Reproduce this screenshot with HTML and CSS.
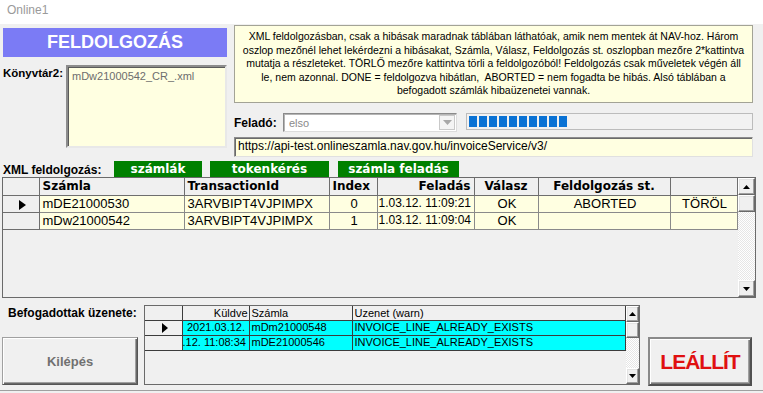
FILE: index.html
```html
<!DOCTYPE html>
<html lang="hu">
<head>
<meta charset="utf-8">
<title>Online1</title>
<link rel="stylesheet" href="styles.css">
</head>
<body>
<div class="win">
  <div class="titlebar">Online1</div>
  <div class="top">
    <div class="left">
      <div class="feld-btn">FELDOLGOZÁS</div>
      <div class="kv-row">
        <span class="lbl">Könyvtár2:</span>
        <div class="kv-box">mDw21000542_CR_.xml</div>
      </div>
    </div>
    <div class="right">
      <div class="info">XML feldolgozásban, csak a hibásak maradnak táblában láthatóak, amik nem mentek át NAV-hoz. Három<br>oszlop mezőnél lehet lekérdezni a hibásakat, Számla, Válasz, Feldolgozás st. oszlopban mezőre 2*kattintva<br>mutatja a részleteket. TÖRLŐ mezőre kattintva törli a feldolgozóból! Feldolgozás csak műveletek végén áll<br>le, nem azonnal. DONE = feldolgozva hibátlan,&nbsp; ABORTED = nem fogadta be hibás. Alsó táblában a<br>befogadott számlák hibaüzenetei vannak.</div>
      <div class="sender-row">
        <span class="lbl lbl-sender">Feladó:</span>
        <div class="combo">
          <span class="combo-text">elso</span>
          <span class="combo-btn"><svg width="9" height="5" viewBox="0 0 9 5"><path d="M0 0h9L4.5 5z" fill="#a8a8a8"/></svg></span>
        </div>
        <div class="progress">
          <span class="seg"></span><span class="seg"></span><span class="seg"></span><span class="seg"></span><span class="seg"></span><span class="seg"></span><span class="seg"></span><span class="seg"></span><span class="seg"></span><span class="seg"></span>
        </div>
      </div>
      <div class="url">https://api-test.onlineszamla.nav.gov.hu/invoiceService/v3/</div>
    </div>
  </div>

  <div class="xml-row">
    <span class="lbl">XML feldolgozás:</span>
    <span class="gbtn g1">számlák</span>
    <span class="gbtn g2">tokenkérés</span>
    <span class="gbtn g3">számla feladás</span>
  </div>

  <div class="grid main-grid">
    <table class="tbl main-tbl">
      <colgroup>
        <col style="width:36px"><col style="width:145px"><col style="width:145px"><col style="width:48px"><col style="width:97px"><col style="width:64px"><col style="width:132px"><col style="width:67px">
      </colgroup>
      <thead>
        <tr><th></th><th class="l">Számla</th><th class="l">TransactionId</th><th class="l">Index</th><th class="r">Feladás</th><th>Válasz</th><th>Feldolgozás st.</th><th></th></tr>
      </thead>
      <tbody>
        <tr><td class="ind"><span class="tri"></span></td><td>mDE21000530</td><td>3ARVBIPT4VJPIMPX</td><td class="c">0</td><td class="dt">1.03.12. 11:09:21</td><td class="c">OK</td><td class="c">ABORTED</td><td class="c">TÖRÖL</td></tr>
        <tr><td class="ind"></td><td>mDw21000542</td><td>3ARVBIPT4VJPIMPX</td><td class="c">1</td><td class="dt">1.03.12. 11:09:04</td><td class="c">OK</td><td></td><td></td></tr>
      </tbody>
    </table>
    <div class="vscroll">
      <div class="sbtn"><svg width="7" height="4" viewBox="0 0 7 4"><path d="M3.5 0L7 4H0z" fill="#000"/></svg></div>
      <div class="sthumb"></div>
      <div class="strack"></div>
      <div class="sbtn"><svg width="7" height="4" viewBox="0 0 7 4"><path d="M0 0h7L3.5 4z" fill="#000"/></svg></div>
    </div>
  </div>

  <div class="bottom">
    <div class="bleft">
      <div class="lbl lbl-bef">Befogadottak üzenete:</div>
      <div class="btn kilep">Kilépés</div>
    </div>
    <div class="grid low-grid">
      <table class="tbl low-tbl">
        <colgroup>
          <col style="width:37px"><col style="width:67px"><col style="width:103px"><col style="width:273px">
        </colgroup>
        <thead>
          <tr><th></th><th class="r">Küldve</th><th class="l">Számla</th><th class="l">Uzenet (warn)</th></tr>
        </thead>
        <tbody>
          <tr><td class="ind"><span class="tri"></span></td><td class="c">2021.03.12.</td><td>mDm21000548</td><td>INVOICE_LINE_ALREADY_EXISTS</td></tr>
          <tr><td class="ind"></td><td class="clip">.12. 11:08:34</td><td>mDE21000546</td><td>INVOICE_LINE_ALREADY_EXISTS</td></tr>
        </tbody>
      </table>
      <div class="vscroll small">
        <div class="sbtn"><svg width="7" height="4" viewBox="0 0 7 4"><path d="M3.5 0L7 4H0z" fill="#000"/></svg></div>
        <div class="sthumb"></div>
        <div class="strack"></div>
        <div class="sbtn"><svg width="7" height="4" viewBox="0 0 7 4"><path d="M0 0h7L3.5 4z" fill="#000"/></svg></div>
      </div>
    </div>
    <div class="bright">
      <div class="btn leallit">LEÁLLÍT</div>
    </div>
  </div>
  <div class="status"></div>
</div>
</body>
</html>
```

FILE: styles.css
```css
* { box-sizing: border-box; }
html, body { margin: 0; padding: 0; }
body {
  width: 763px;
  height: 393px;
  overflow: hidden;
  background: #f0f0f0;
  font-family: "Liberation Sans", Arial, sans-serif;
  color: #000;
}
.win { width: 763px; height: 393px; position: relative; }

.titlebar {
  height: 24px;
  background: #ffffff;
  color: #9a9a9a;
  font-size: 12px;
  line-height: 20px;
  padding-left: 7px;
}

.lbl {
  font-weight: bold;
  font-size: 12px;
  white-space: nowrap;
}

.top {
  display: flex;
  align-items: flex-start;
  gap: 7px;
  padding-left: 3px;
  height: 136px;
}
.left { width: 224px; }
.feld-btn {
  margin-top: 4px;
  height: 29px;
  background: #7b7bf5;
  color: #fff;
  font-weight: bold;
  font-size: 18px;
  display: flex;
  align-items: center;
  justify-content: center;
  padding-bottom: 1px;
}
.kv-row {
  display: flex;
  align-items: flex-start;
  margin-top: 8px;
}
.kv-row .lbl { padding-top: 2px; font-size: 11.5px; }
.kv-box {
  margin-left: auto;
  width: 161px;
  height: 83px;
  background: #ffffe1;
  border: 2px solid;
  border-color: #8c8c8c #e8e8e8 #e8e8e8 #8c8c8c;
  box-shadow: inset 1px 1px 0 #5a5a5a;
  color: #6d6d6d;
  font-size: 11px;
  padding: 3px 0 0 4px;
}

.right { width: 519px; }
.info {
  margin-top: 1px;
  height: 78px;
  background: #ffffe1;
  border: 1px solid #a3a396;
  font-size: 10.5px;
  line-height: 13.5px;
  text-align: center;
  padding-top: 4px;
  white-space: nowrap;
  overflow: hidden;
}
.sender-row {
  display: flex;
  align-items: flex-start;
  margin-top: 10px;
  height: 19px;
}
.lbl-sender { width: 49px; padding-top: 3px; }
.combo {
  width: 174px;
  height: 19px;
  background: #fff;
  border: 1px solid;
  border-color: #8a8a8a #dcdcdc #dcdcdc #8a8a8a;
  box-shadow: inset 1px 1px 0 #b5b5b5;
  display: flex;
  align-items: center;
}
.combo-text {
  flex: 1;
  color: #8a8a8a;
  font-size: 11px;
  padding-left: 5px;
}
.combo-btn {
  width: 16px;
  height: 15px;
  margin-right: 1px;
  border: 1px solid #c9c9c9;
  background: #f4f4f4;
  display: flex;
  align-items: center;
  justify-content: center;
}
.progress {
  margin-left: 9px;
  width: 287px;
  height: 17px;
  border: 1px solid #bcbcbc;
  background: #f2f2f2;
  display: flex;
  gap: 2px;
  padding: 2px 0 2px 2px;
}
.seg { width: 8px; height: 100%; background: #0a72d4; }
.url {
  margin-top: 5px;
  height: 20px;
  background: #ffffe1;
  border: 1px solid;
  border-color: #8c8c8c #e0e0e0 #e0e0e0 #8c8c8c;
  box-shadow: inset 1px 1px 0 #6a6a6a;
  font-size: 12px;
  line-height: 17px;
  padding-left: 3px;
  white-space: nowrap;
}

.xml-row {
  display: flex;
  align-items: flex-end;
  margin-top: 1px;
  height: 16px;
  padding-left: 3px;
}
.xml-row .lbl { width: 111px; line-height: 14px; }
.gbtn {
  height: 16px;
  background: #008000;
  color: #fff;
  font-family: "DejaVu Sans", Verdana, sans-serif;
  font-weight: bold;
  font-size: 12px;
  line-height: 16px;
  text-align: center;
}
.g1 { width: 88px; }
.g2 { width: 119px; margin-left: 8px; }
.g3 { width: 121px; margin-left: 9px; }

.grid {
  display: flex;
  border: 1px solid #6a6a6a;
  background: #f0f0f0;
}
.main-grid {
  margin-left: 2px;
  width: 754px;
  height: 121px;
}
.tbl {
  border-collapse: collapse;
  table-layout: fixed;
  align-self: flex-start;
}
.main-tbl { width: 734px; }
.main-tbl th {
  height: 17px;
  font-family: "DejaVu Sans", Verdana, sans-serif;
  font-weight: bold;
  font-size: 12px;
  border: 1px solid #6e6e6e;
  border-top: 0;
  padding: 0 3px;
  background: #f0f0f0;
  white-space: nowrap;
  overflow: hidden;
}
.main-tbl th:first-child { border-left: 0; }
.main-tbl td {
  height: 17px;
  font-size: 13px;
  border: 1px solid #8a8a8a;
  padding: 0 1px 0 3px;
  background: #ffffe1;
  white-space: nowrap;
  overflow: hidden;
  line-height: 15px;
}
.main-tbl td.dt { font-size: 12px; padding-left: 1px; }
.main-tbl td:first-child { border-left: 0; }
.tbl th.l { text-align: left; }
.tbl th.r { text-align: right; }
.tbl td.c { text-align: center; }
.tbl td.ind {
  background: #f0f0f0;
  text-align: center;
  padding: 0;
}
.main-tbl td.ind { border-color: #6e6e6e; }
.tri {
  display: inline-block;
  width: 0;
  height: 0;
  border-left: 7px solid #000;
  border-top: 5px solid transparent;
  border-bottom: 5px solid transparent;
  vertical-align: middle;
  margin-left: 4px;
}

.vscroll {
  margin-left: auto;
  width: 18px;
  display: flex;
  flex-direction: column;
}
.sbtn, .sthumb {
  height: 17px;
  background: #f0f0f0;
  border: 1px solid;
  border-color: #fff #696969 #696969 #fff;
  box-shadow: inset -1px -1px 0 #a0a0a0, inset 1px 1px 0 #e3e3e3;
  display: flex;
  align-items: center;
  justify-content: center;
}
.strack {
  flex: 1;
  background: repeating-conic-gradient(#fff 0 25%, #e6e6e6 0 50%) 0 0 / 2px 2px;
}

.bottom {
  display: flex;
  align-items: flex-start;
  padding-top: 7px;
}
.bleft { width: 144px; }
.lbl-bef { padding-left: 8px; height: 32px; padding-top: 1px; }
.btn {
  background: #f0f0f0;
  border: 1px solid;
  border-color: #a0a0a0 #555 #555 #a0a0a0;
  box-shadow: inset 1px 1px 0 #fff, inset -1px -1px 0 #696969, inset -2px -2px 0 #a0a0a0;
  display: flex;
  align-items: center;
  justify-content: center;
  font-weight: bold;
}
.kilep {
  margin-left: 2px;
  width: 136px;
  height: 48px;
  color: #707070;
  font-size: 13px;
}
.low-grid {
  width: 496px;
  height: 80px;
}
.low-tbl { width: 480px; }
.low-tbl th {
  height: 14px;
  font-weight: normal;
  font-size: 11px;
  line-height: 12px;
  border: 1px solid #3c3c3c;
  border-top: 0;
  padding: 0 1px 0 2px;
  background: #f0f0f0;
  white-space: nowrap;
}
.low-tbl th:first-child { border-left: 0; }
.low-tbl td {
  height: 15px;
  font-size: 11px;
  line-height: 13px;
  border: 1px solid #3c3c3c;
  padding: 0 1px 0 2px;
  background: #00ffff;
  white-space: nowrap;
  overflow: hidden;
}
.low-tbl td:first-child { border-left: 0; }
.low-tbl td.clip { padding-left: 0; }
.low-tbl .tri { border-left-width: 6px; border-top-width: 5px; border-bottom-width: 5px; }
.vscroll.small { width: 16px; }
.vscroll.small .sbtn, .vscroll.small .sthumb { height: 16px; }

.bright { margin-left: 8px; padding-top: 32px; }
.leallit {
  width: 104px;
  height: 49px;
  color: #e01010;
  font-size: 21px;
  letter-spacing: -1px;
  border: 2px solid;
  border-color: #8a8a8a #505050 #505050 #8a8a8a;
  box-shadow: inset 1px 1px 0 #fff, inset -1px -1px 0 #7a7a7a, inset -2px -2px 0 #a0a0a0;
}
.status {
  position: absolute;
  left: 0;
  top: 390px;
  width: 763px;
  height: 3px;
  border-top: 1px solid #a0a0a0;
}
```
